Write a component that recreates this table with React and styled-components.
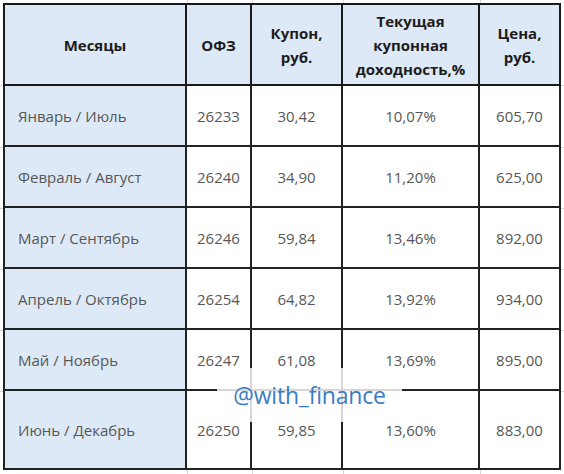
import React from 'react';
import styled, { createGlobalStyle } from 'styled-components';

const GlobalStyle = createGlobalStyle`
  html, body {
    margin: 0;
    padding: 0;
    background: #ffffff;
  }
  body {
    width: 564px;
    height: 474px;
    overflow: hidden;
    font-family: 'Open Sans', 'Noto Sans', sans-serif;
  }
`;

const gridX = [187, 252, 343, 480];
const gridY = [85, 147, 208, 269, 330, 391];
const line = 'linear-gradient(#d6d6d6, #d6d6d6)';

/* faint spreadsheet gridlines peeking out around the table */
const Sheet = styled.div`
  position: relative;
  width: 564px;
  height: 474px;
  padding: 3px 0 0 3px;
  box-sizing: border-box;
  background-color: #ffffff;
  background-repeat: no-repeat;
  background-image: ${[...gridX, ...gridY].map(() => line).join(', ')};
  background-size: ${[
    ...gridX.map(() => '1px 100%'),
    ...gridY.map(() => '100% 1px'),
  ].join(', ')};
  background-position: ${[
    ...gridX.map((x) => `${x}px 0`),
    ...gridY.map((y) => `0 ${y}px`),
  ].join(', ')};
`;

const Table = styled.table`
  border-collapse: collapse;
  table-layout: fixed;
  width: 558px;
  border: 2px solid #111111;
`;

const HeadCell = styled.th`
  height: 79px;
  padding: 0 4px;
  background: #dde9f6;
  color: #1c1c1c;
  font-size: 15px;
  font-weight: 700;
  line-height: 24px;
  text-align: center;
  vertical-align: middle;
  border: 2px solid #1a1a1a;
`;

const Cell = styled.td`
  height: ${(p) => (p.$tall ? '77px' : '59px')};
  padding: 0 4px;
  background: ${(p) => (p.$first ? '#dde9f6' : '#ffffff')};
  color: #575757;
  font-size: 15px;
  text-align: ${(p) => (p.$first ? 'left' : 'center')};
  padding-left: ${(p) => (p.$first ? '13px' : '4px')};
  vertical-align: middle;
  border: 2px solid #222222;
`;

const Watermark = styled.div`
  position: absolute;
  left: 217px;
  top: 368px;
  width: 185px;
  height: 54px;
  background: rgba(255, 255, 255, 0.82);
  display: flex;
  align-items: center;
  justify-content: center;
  color: #3a7bc4;
  font-family: 'Open Sans', sans-serif;
  font-size: 23px;
  letter-spacing: -0.2px;
`;

const rows = [
  ['Январь / Июль', '26233', '30,42', '10,07%', '605,70'],
  ['Февраль / Август', '26240', '34,90', '11,20%', '625,00'],
  ['Март / Сентябрь', '26246', '59,84', '13,46%', '892,00'],
  ['Апрель / Октябрь', '26254', '64,82', '13,92%', '934,00'],
  ['Май / Ноябрь', '26247', '61,08', '13,69%', '895,00'],
  ['Июнь / Декабрь', '26250', '59,85', '13,60%', '883,00'],
];

const widths = [182, 65, 91, 137, 81];

export default function App() {
  return (
    <>
      <GlobalStyle />
      <Sheet>
        <Table>
          <colgroup>
            {widths.map((w, i) => (
              <col key={i} style={{ width: w }} />
            ))}
          </colgroup>
          <thead>
            <tr>
              <HeadCell>Месяцы</HeadCell>
              <HeadCell>ОФЗ</HeadCell>
              <HeadCell>
                Купон,
                <br />
                руб.
              </HeadCell>
              <HeadCell>
                Текущая
                <br />
                купонная
                <br />
                доходность,%
              </HeadCell>
              <HeadCell>
                Цена,
                <br />
                руб.
              </HeadCell>
            </tr>
          </thead>
          <tbody>
            {rows.map((r, i) => (
              <tr key={r[1]}>
                {r.map((v, j) => (
                  <Cell key={j} $first={j === 0} $tall={i === rows.length - 1}>
                    {v}
                  </Cell>
                ))}
              </tr>
            ))}
          </tbody>
        </Table>
        <Watermark>@with_finance</Watermark>
      </Sheet>
    </>
  );
}
